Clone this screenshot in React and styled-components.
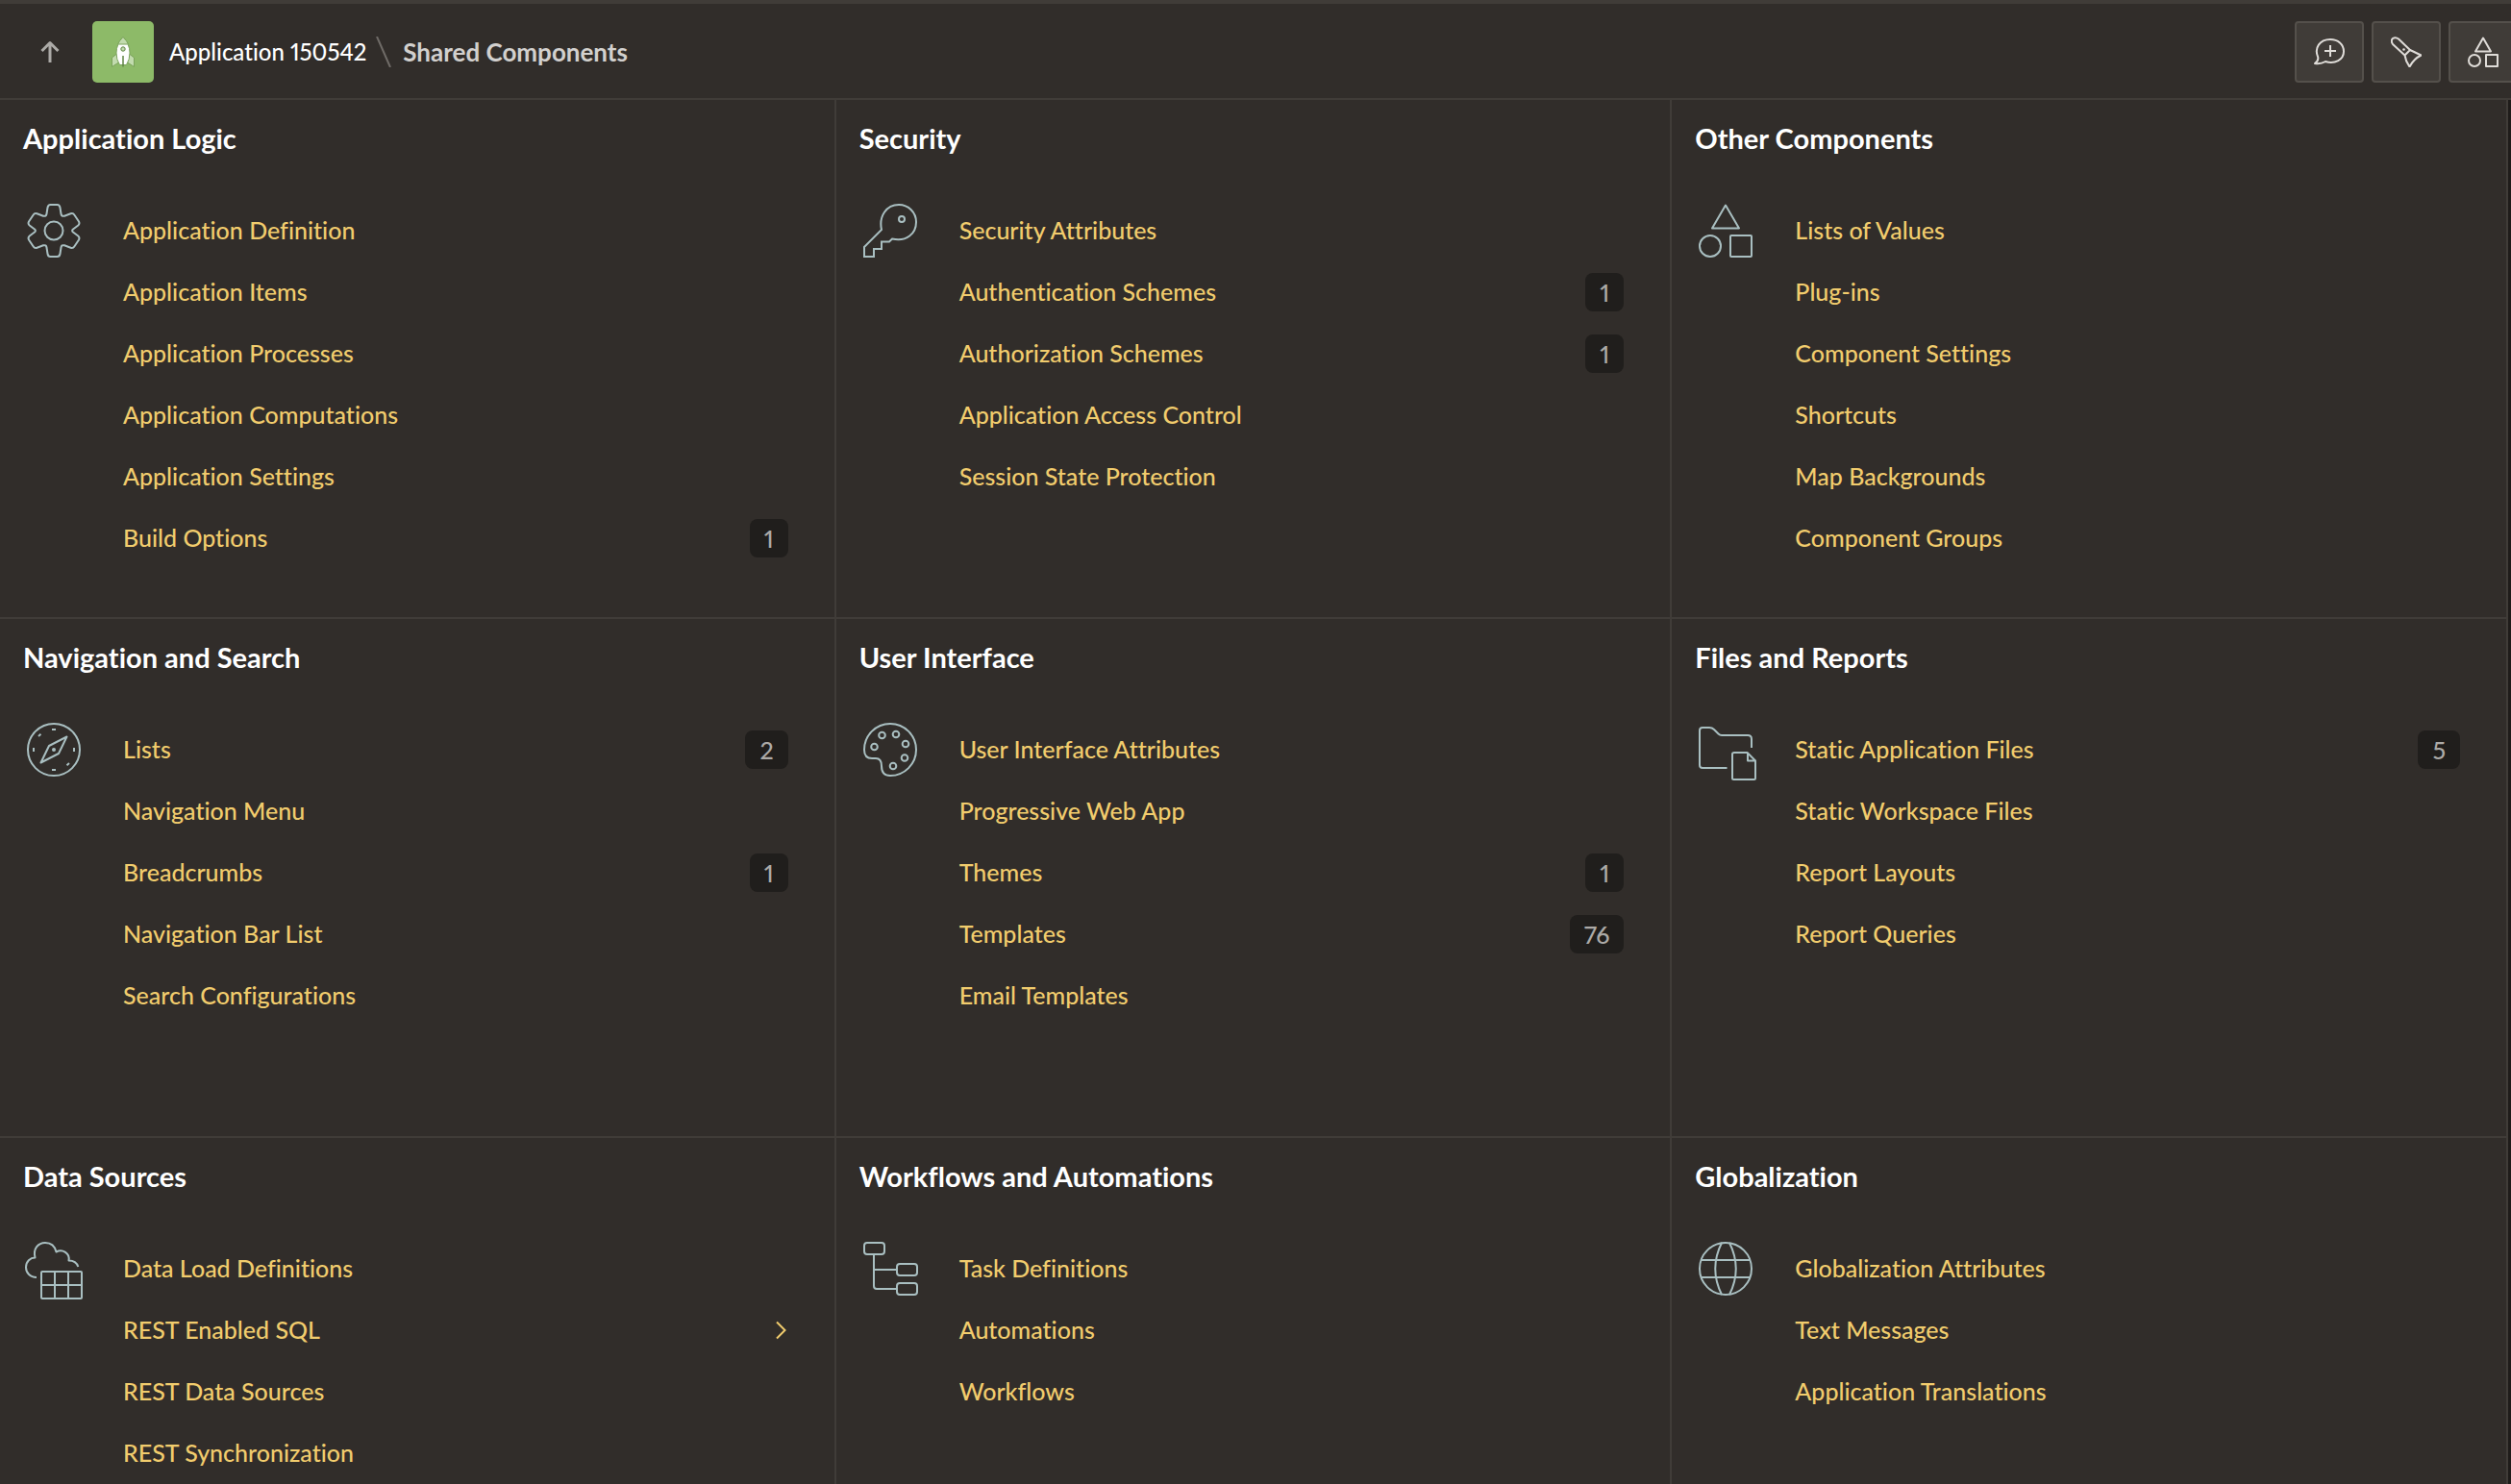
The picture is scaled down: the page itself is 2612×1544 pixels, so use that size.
import React from "react";
import styled, { createGlobalStyle } from "styled-components";

const GlobalStyle = createGlobalStyle`
  * { box-sizing: border-box; }
  body {
    margin: 0;
    min-height: 100vh;
    background: #312d2a;
    color: #ffffff;
    font-family: Lato, "Noto Sans", sans-serif;
    font-size: 25px;
    font-weight: 500;
    font-variant-ligatures: none;
    font-variant-numeric: proportional-nums;
    line-height: 32px;
  }
`;

const Page = styled.div`
  height: 100vh;
  overflow: hidden;
  border-top: 4px solid #403c38;
`;

const Header = styled.header`
  display: flex;
  align-items: center;
  height: 100px;
  padding: 2px 0 0 32px;
  border-bottom: 2px solid #403c38;
`;

const UpButton = styled.button`
  display: flex;
  align-items: center;
  justify-content: center;
  width: 40px;
  height: 64px;
  margin-right: 24px;
  padding: 0;
  border: 0;
  background: none;
  color: #acaaa7;
`;

const AppIcon = styled.span`
  display: flex;
  align-items: center;
  justify-content: center;
  flex: none;
  width: 64px;
  height: 64px;
  margin-right: 16px;
  border-radius: 5px;
  background: #8dba68;
`;

const Crumbs = styled.nav`
  display: flex;
  align-items: center;
  flex: 1;
  gap: 10px;
  white-space: nowrap;
`;

const CrumbLink = styled.a`
  color: #ffffff;
  font-size: 24px;
  text-decoration: none;
`;

const Current = styled.h1`
  margin: 0;
  color: #d2d0ce;
  font-size: 26px;
  font-weight: 700;
  line-height: 32px;
`;

const Tools = styled.div`
  display: flex;
  gap: 8px;
  margin-right: -7px;
`;

const ToolButton = styled.button`
  display: flex;
  align-items: center;
  justify-content: center;
  width: 72px;
  height: 64px;
  padding: 0;
  border: 2px solid #54504b;
  border-radius: 4px;
  background: #403c38;
  color: #dfdcd8;
`;

const Grid = styled.main`
  display: grid;
  grid-template-columns: repeat(3, 1fr);
  grid-auto-rows: 540px;
  border-right: 3px solid #1f1c1a;
`;

const Cell = styled.section`
  padding: 24px 48px 0 24px;
  border-right: 2px solid #403c38;
  border-bottom: 2px solid #403c38;
`;

const Title = styled.h2`
  margin: 0 0 48px;
  font-size: 29px;
  font-weight: 700;
  line-height: 32px;
`;

const Body = styled.div`
  display: flex;
  gap: 40px;
`;

const IconBox = styled.div`
  flex: none;
  width: 64px;
  height: 64px;
  color: #a9bfc1;
`;

const List = styled.ul`
  flex: 1;
  margin: 0;
  padding: 0;
  list-style: none;
`;

const Item = styled.li`
  display: flex;
  align-items: center;
  justify-content: space-between;
  height: 64px;
`;

const ItemLink = styled.a`
  padding-bottom: 2px;
  color: #f1cc6d;
  text-decoration: none;
`;

const Badge = styled.span`
  padding: 4px 15px;
  border-radius: 8px;
  background: #201e1c;
  color: #acaaa7;
`;

const Drawing = ({ size = 64, width = 2, box = 64, children }) => (
  <svg
    width={size}
    height={size}
    viewBox={`0 0 ${box} ${box}`}
    fill="none"
    stroke="currentColor"
    strokeWidth={width}
    strokeLinejoin="round"
    aria-hidden="true"
    display="block"
  >
    {children}
  </svg>
);

const GearIcon = () => (
  <Drawing>
    <path d="M25.5 8Q26 5 28.500 5H35.500Q38 5 38.500 8L39.500 14.500Q40 17.500 43 16.700L49.500 14.300Q52 13.400 53.300 15.500L58 22.500Q59.200 24.800 57.300 26.500L52 30.500Q50.200 32 52 33.500L57.300 37.500Q59.200 39.200 58 41.500L53.300 48.500Q52 50.600 49.500 49.700L43 47.300Q40 46.500 39.500 49.500L38.500 56Q38 59 35.500 59H28.500Q26 59 25.500 56L24.500 49.500Q24 46.500 21 47.300L14.500 49.700Q12 50.600 10.700 48.500L6 41.500Q4.800 39.200 6.700 37.500L12 33.500Q13.800 32 12 30.500L6.700 26.500Q4.800 24.800 6 22.500L10.700 15.500Q12 13.400 14.500 14.300L21 16.700Q24 17.500 24.500 14.500Z" />
    <circle cx="32" cy="32" r="9.500" />
  </Drawing>
);

const KeyIcon = () => (
  <Drawing>
    <path strokeLinejoin="miter" d="M23 31C20 17 28 5 41 5C51 5 59 13 59 23C59 35 49 44 34 40.500L31 43.500H23V51H15V59H5V49Z" />
    <circle cx="44" cy="20" r="3" />
  </Drawing>
);

const ShapesIcon = () => (
  <Drawing>
    <path d="M32 5.500L46 29.500H18Z" />
    <circle cx="16" cy="48" r="11" />
    <rect x="37" y="37" width="22" height="22" rx="1" />
  </Drawing>
);

const CompassIcon = () => (
  <Drawing>
    <circle cx="32" cy="32" r="27" />
    <path d="M45.500 18.500L37 36L18.500 45.500L27 28Z" />
    <circle cx="32" cy="32" r="2" fill="currentColor" stroke="none" />
    <path d="M30 11H34M30 53H34M11 30V34M53 30V34M16 18L18.500 15.800M45.500 48.200L48 46" />
  </Drawing>
);

const PaletteIcon = () => (
  <Drawing>
    <path d="M32 5A27 27 0 0 1 32 59Q23 59 23 49Q23 41 17 41H13Q5 41 5 32A27 27 0 0 1 32 5Z" />
    <circle cx="15.500" cy="29" r="3.300" />
    <circle cx="23.500" cy="17" r="3.300" />
    <circle cx="38" cy="16" r="3.300" />
    <circle cx="48" cy="26" r="3.300" />
    <circle cx="47" cy="40.500" r="3.300" />
    <circle cx="35" cy="49" r="3.300" />
  </Drawing>
);

const FolderIcon = () => (
  <Drawing>
    <path d="M33.500 51H8Q5 51 5 48V12Q5 9 8 9H15Q18 9 20 11L24.500 15.500Q26 17 28 17H55Q59 17 59 21V30" />
    <path d="M41 35H54.500L63 43.500V61.500Q63 63 61.500 63H40.500Q39 63 39 61.500V36.500Q39 35 41 35ZM55 35V43.500H63" />
  </Drawing>
);

const CloudGridIcon = () => (
  <Drawing>
    <path d="M14 41C7 41 3 36 3 30.500C3 24.500 7.500 20.500 12.500 20.500C10 11 16 5 23 5C29 5 33 8.500 34.500 14.500C41 11 49 16 47.500 23.500C52 23.500 56 26 57.300 30" />
    <rect x="19" y="35" width="42" height="28" rx="1" />
    <path d="M33 35V63M47 35V63M19 49H61" />
  </Drawing>
);

const FlowIcon = () => (
  <Drawing>
    <rect x="5" y="5" width="21" height="12" rx="3" />
    <rect x="39" y="27" width="21" height="12" rx="3" />
    <rect x="39" y="47" width="21" height="12" rx="3" />
    <path d="M15 17V50Q15 53 18 53H39M15 33H39" />
  </Drawing>
);

const GlobeIcon = () => (
  <Drawing>
    <circle cx="32" cy="32" r="27" />
    <path d="M28 5Q14.500 32 28 59M36 5Q49.500 32 36 59M6.500 23H57.500M6.500 41H57.500" />
  </Drawing>
);

const UpIcon = () => (
  <Drawing size={24} box={24} width={3}>
    <path d="M12 23V3M3.500 11L12 2.500L20.500 11" />
  </Drawing>
);

const RocketIcon = () => (
  <Drawing size={32} box={32} width={1}>
    <path d="M9.500 18L4.500 22V31.500L11.500 27ZM22.500 18L27.500 22V31.500L20.500 27Z" fill="#c2dbae" stroke="#7aa35a" />
    <path d="M16 .5Q9 8 9 17Q9 24 12.500 29.500H19.500Q23 24 23 17Q23 8 16 .5Z" fill="#ffffff" stroke="#7aa35a" />
    <path d="M16 .5Q12 4.500 10.500 8H21.500Q20 4.500 16 .5Z" fill="#c2dbae" stroke="#7aa35a" />
    <circle cx="16" cy="13" r="2.200" fill="#c2dbae" stroke="#5f8343" />
    <path d="M16 20V31.500" stroke="#5f8343" strokeWidth="1.500" />
  </Drawing>
);

const SlashIcon = () => (
  <svg width="18" height="32" viewBox="0 0 18 32" fill="none" stroke="#6f6b67" strokeWidth="2" aria-hidden="true">
    <path d="M1 0L15 32" />
  </svg>
);

const CommentIcon = () => (
  <Drawing size={32} box={32}>
    <path d="M1 28Q5 25 4.200 21.500C0 12 6 3 17 3C25 3 31 8 31 15.500C31 24 22 29 12 26Q7 29 1 28Z" />
    <path d="M17 9V21M11 15H23" />
  </Drawing>
);

const FlashlightIcon = () => (
  <Drawing size={32} box={32}>
    <path d="M14.500 19.500L2 8Q-.5 4.500 2 2Q5 .2 8 2.500L20 14L14.500 19.500M20 14L31.500 19.500Q24 23 19.500 31.500Q15.500 26 14.500 19.500" />
    <circle cx="13.500" cy="13.500" r="1.300" fill="currentColor" stroke="none" />
  </Drawing>
);

const ToolShapesIcon = () => (
  <Drawing size={32} box={32}>
    <path d="M16 1.500L24 15.500H8Z" />
    <circle cx="7" cy="25" r="6" />
    <rect x="19" y="19" width="12" height="12" />
  </Drawing>
);

const ChevronIcon = () => (
  <svg width="14" height="20" viewBox="0 0 14 20" fill="none" stroke="#f1cc6d" strokeWidth="2" aria-hidden="true">
    <path d="M2 1.500L10.500 10L2 18.500" />
  </svg>
);

const sections = [
  { title: "Application Logic", Icon: GearIcon, items: [["Application Definition"], ["Application Items"], ["Application Processes"], ["Application Computations"], ["Application Settings"], ["Build Options", 1]] },
  { title: "Security", Icon: KeyIcon, items: [["Security Attributes"], ["Authentication Schemes", 1], ["Authorization Schemes", 1], ["Application Access Control"], ["Session State Protection"]] },
  { title: "Other Components", Icon: ShapesIcon, items: [["Lists of Values"], ["Plug-ins"], ["Component Settings"], ["Shortcuts"], ["Map Backgrounds"], ["Component Groups"]] },
  { title: "Navigation and Search", Icon: CompassIcon, items: [["Lists", 2], ["Navigation Menu"], ["Breadcrumbs", 1], ["Navigation Bar List"], ["Search Configurations"]] },
  { title: "User Interface", Icon: PaletteIcon, items: [["User Interface Attributes"], ["Progressive Web App"], ["Themes", 1], ["Templates", 76], ["Email Templates"]] },
  { title: "Files and Reports", Icon: FolderIcon, items: [["Static Application Files", 5], ["Static Workspace Files"], ["Report Layouts"], ["Report Queries"]] },
  { title: "Data Sources", Icon: CloudGridIcon, items: [["Data Load Definitions"], ["REST Enabled SQL", "more"], ["REST Data Sources"], ["REST Synchronization"]] },
  { title: "Workflows and Automations", Icon: FlowIcon, items: [["Task Definitions"], ["Automations"], ["Workflows"]] },
  { title: "Globalization", Icon: GlobeIcon, items: [["Globalization Attributes"], ["Text Messages"], ["Application Translations"]] },
];

export default function App() {
  return (
    <>
      <GlobalStyle />
      <Page>
        <Header>
          <UpButton aria-label="Up"><UpIcon /></UpButton>
          <AppIcon><RocketIcon /></AppIcon>
          <Crumbs>
            <CrumbLink href="#">Application 150542</CrumbLink>
            <SlashIcon />
            <Current>Shared Components</Current>
          </Crumbs>
          <Tools>
            <ToolButton aria-label="Feedback"><CommentIcon /></ToolButton>
            <ToolButton aria-label="Search"><FlashlightIcon /></ToolButton>
            <ToolButton aria-label="Shared Components"><ToolShapesIcon /></ToolButton>
          </Tools>
        </Header>
        <Grid>
          {sections.map(({ title, Icon, items }) => (
            <Cell key={title}>
              <Title>{title}</Title>
              <Body>
                <IconBox><Icon /></IconBox>
                <List>
                  {items.map(([name, extra]) => (
                    <Item key={name}>
                      <ItemLink href="#">{name}</ItemLink>
                      {typeof extra === "number" && <Badge>{extra}</Badge>}
                      {extra === "more" && <ChevronIcon />}
                    </Item>
                  ))}
                </List>
              </Body>
            </Cell>
          ))}
        </Grid>
      </Page>
    </>
  );
}
